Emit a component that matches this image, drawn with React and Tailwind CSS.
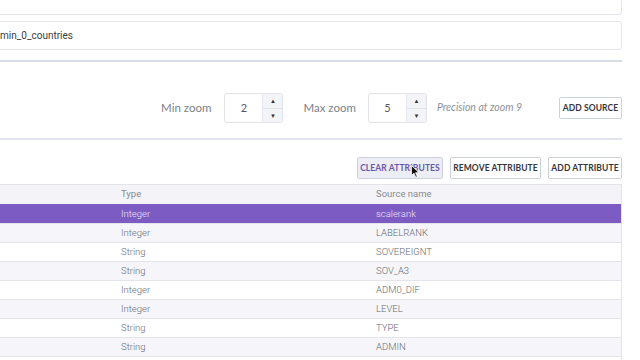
import React from "react";

const rows = [
  ["Integer", "scalerank", true],
  ["Integer", "LABELRANK"],
  ["String", "SOVEREIGNT"],
  ["String", "SOV_A3"],
  ["Integer", "ADM0_DIF"],
  ["Integer", "LEVEL"],
  ["String", "TYPE"],
  ["String", "ADMIN"],
  ["", ""],
];

function Spinner({ value }) {
  return (
    <div className="flex h-[30px] w-[59px] rounded-[3px] border border-[#e1e3e9] bg-white overflow-hidden">
      <div className="flex flex-1 items-center justify-center text-[11px] text-[#555a63]">{value}</div>
      <div className="flex w-[20px] flex-col border-l border-[#e6e8ee] bg-[#f3f4f8]">
        <div className="flex flex-1 items-center justify-center border-b border-[#e1e3e9] text-[6px] text-[#333]">▲</div>
        <div className="flex flex-1 items-center justify-center text-[6px] text-[#333]">▼</div>
      </div>
    </div>
  );
}

function Btn({ children, hover, w }) {
  return (
    <div
      className={`flex h-[22px] items-center justify-center rounded-[2px] border text-[8.5px] font-bold tracking-[0.1px] ${w} ${
        hover ? "border-[#cfd0de] bg-[#ededf6] text-[#6a58a6]" : "border-[#cdd1d8] bg-white text-[#33363c]"
      }`}
      style={{ fontFamily: "Lato, 'Open Sans', sans-serif" }}
    >
      {children}
    </div>
  );
}

export default function App() {
  return (
    <div className="relative h-[360px] w-[640px] overflow-hidden bg-white" style={{ fontFamily: "Roboto, 'Liberation Sans', sans-serif" }}>
      <div className="-ml-[40px] w-[662px]">
        {/* top section */}
        <div className="border-b-2 border-[#d8dce3] pb-[10px]">
          <div className="-mt-[25px] h-[40px] rounded-[3px] border border-[#e3e5ea] bg-white" />
          <div className="mt-[6px] flex h-[29px] items-center rounded-[3px] border border-[#e3e5ea] bg-white pl-[28px] text-[10px] text-[#3a3d44]">
            admin_0_countries
          </div>
        </div>

        {/* zoom section */}
        <div className="flex items-center justify-end border-b-2 border-[#e0e3e9] pb-[15px] pt-[31px]" style={{ fontFamily: "Lato, 'Open Sans', sans-serif" }}>
          <span className="text-[11.5px] text-[#7b7f88]">Min zoom</span>
          <div className="ml-[13px]"><Spinner value="2" /></div>
          <span className="ml-[20px] text-[11.5px] text-[#7b7f88]">Max zoom</span>
          <div className="ml-[12px]"><Spinner value="5" /></div>
          <span className="ml-[10px] text-[10.5px] italic text-[#8d919a]">Precision at zoom 9</span>
          <div className="ml-[37px]"><Btn w="w-[63px]">ADD SOURCE</Btn></div>
        </div>

        {/* buttons */}
        <div className="flex justify-end gap-[7px] pt-[17px]">
          <Btn hover w="w-[86px]">CLEAR ATTRIBUTES</Btn>
          <Btn w="w-[91px]">REMOVE ATTRIBUTE</Btn>
          <Btn w="w-[74px]">ADD ATTRIBUTE</Btn>
        </div>

        {/* table */}
        <div className="mt-[5px] border border-[#e2e4ea]">
          <div className="grid h-[19px] grid-cols-[160px_255px_1fr] items-center bg-[#f4f4f8] text-[9.5px] text-[#868a93]">
            <div />
            <div>Type</div>
            <div>Source name</div>
          </div>
          {rows.map(([t, s, sel], i) => (
            <div
              key={i}
              className={`grid h-[19px] grid-cols-[160px_255px_1fr] items-center border-t text-[9.5px] font-light ${
                sel
                  ? "border-[#7c5bc3] bg-[#7c5bc3] text-[#ece6f7]"
                  : i % 2 === 1
                  ? "border-[#e3e5ea] bg-[#f6f6fa] text-[#666a73]"
                  : "border-[#e3e5ea] bg-white text-[#666a73]"
              }`}
            >
              <div />
              <div>{t}</div>
              <div>{s}</div>
            </div>
          ))}
        </div>
      </div>

      {/* cursor */}
      <svg className="absolute left-[411px] top-[165px]" width="9" height="13" viewBox="0 0 9 13">
        <path d="M0.5 0.5 L0.5 10.5 L3 8.2 L4.8 12.3 L6.3 11.6 L4.6 7.7 L8 7.7 Z" fill="#111" stroke="#fff" strokeWidth="0.8" />
      </svg>
    </div>
  );
}
